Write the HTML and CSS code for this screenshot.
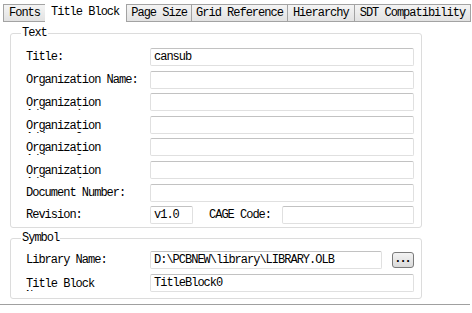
FILE: index.html
```html
<!DOCTYPE html>
<html>
<head>
<meta charset="utf-8">
<link rel="stylesheet" href="styles.css">
</head>
<body>
<div class="tabs">
  <div class="tab wide">Fonts</div>
  <div class="tab active">Title Block</div>
  <div class="tab">Page Size</div>
  <div class="tab">Grid Reference</div>
  <div class="tab wide">Hierarchy</div>
  <div class="tab wide">SDT Compatibility</div>
</div>
<div class="pane">
  <fieldset class="group">
    <legend>Text</legend>
    <div class="row"><div class="lbl">Title:</div><div class="field">cansub</div></div>
    <div class="row"><div class="lbl">Organization Name:</div><div class="field"></div></div>
    <div class="row"><div class="lbl wrap"><span class="wt">Organization Address 1</span></div><div class="field"></div></div>
    <div class="row"><div class="lbl wrap"><span class="wt">Organization Address 2</span></div><div class="field"></div></div>
    <div class="row"><div class="lbl wrap"><span class="wt">Organization Address 3</span></div><div class="field"></div></div>
    <div class="row"><div class="lbl wrap"><span class="wt">Organization Address 4</span></div><div class="field"></div></div>
    <div class="row"><div class="lbl">Document Number:</div><div class="field"></div></div>
    <div class="row"><div class="lbl">Revision:</div><div class="field rev">v1.0</div><div class="lbl cage">CAGE Code:</div><div class="field"></div></div>
  </fieldset>
  <fieldset class="group symbol">
    <legend>Symbol</legend>
    <div class="row"><div class="lbl">Library Name:</div><div class="field">D:\PCBNEW\library\LIBRARY.OLB</div><div class="btn">...</div></div>
    <div class="row"><div class="lbl wrap"><span class="wt ws">Title Block Name:</span></div><div class="field">TitleBlock0</div></div>
  </fieldset>
</div>
<div class="rule"></div>
</body>
</html>
```
FILE: styles.css
```css
html, body {
  margin: 0;
  padding: 0;
  background: #ffffff;
}
body {
  width: 472px;
  height: 313px;
  overflow: hidden;
  font-family: "Liberation Mono", monospace;
  font-size: 12px;
  letter-spacing: -1px;
  color: #000;
}
.tabs {
  display: flex;
  height: 18px;
  margin: 4px 0 0 3px;
}
.tab {
  box-sizing: border-box;
  height: 18px;
  line-height: 16px;
  padding: 0 4px;
  border: 1px solid #a3a3a3;
  margin-left: -1px;
  background: linear-gradient(#f4f4f4, #e2e2e2);
  white-space: nowrap;
}
.tab.wide { padding: 0 5px; }
.tab:first-child { margin-left: 0; }
.tab.active {
  background: #ffffff;
  border-color: transparent;
  line-height: 14px;
  padding: 0 7px 0 5px;
}
.pane {
  margin-top: 5px;
}
.group {
  box-sizing: border-box;
  width: 412px;
  margin: 0 0 0 10px;
  padding: 8px 7px 3px 15px;
  border: 1px solid #dcdcdc;
  border-radius: 3px;
  display: flex;
  flex-direction: column;
  gap: 4.6px;
}
.group legend {
  padding: 0 1px;
  margin-left: -5px;
  line-height: 13px;
}
.group.symbol {
  margin-top: 4px;
  padding-top: 6px;
  padding-bottom: 6px;
  gap: 5px;
}
.row {
  display: flex;
  align-items: center;
  height: 18px;
}
.lbl {
  flex: none;
  width: 124px;
  line-height: 18px;
  white-space: nowrap;
}
.lbl.wrap {
  align-self: flex-start;
  box-sizing: border-box;
  height: 17px;
  padding-top: 4px;
  line-height: 12px;
  overflow: hidden;
  white-space: normal;
}
.wt {
  display: block;
  width: 118px;
}
.wt.ws { width: 96px; }
.lbl.cage {
  width: auto;
  margin: 0 11px 0 16px;
}
.field {
  flex: 1;
  box-sizing: border-box;
  height: 18px;
  line-height: 16px;
  padding: 0 3px;
  border: 1px solid #e0e0e0;
  border-top-color: #c2c2c2;
  border-radius: 2px;
  white-space: nowrap;
  overflow: hidden;
}
.field.rev {
  flex: none;
  width: 43px;
}
.btn {
  flex: none;
  box-sizing: border-box;
  width: 22px;
  height: 16px;
  margin-left: 10px;
  border: 1px solid #7a7a7a;
  border-radius: 3px;
  background: linear-gradient(#f3f3f3, #dadada);
  text-align: center;
  line-height: 12px;
  font-weight: bold;
  letter-spacing: -2px;
  padding-right: 2px;
}
.rule {
  width: 470px;
  height: 1px;
  margin-top: 5px;
  background: #a0a0a0;
}
```
